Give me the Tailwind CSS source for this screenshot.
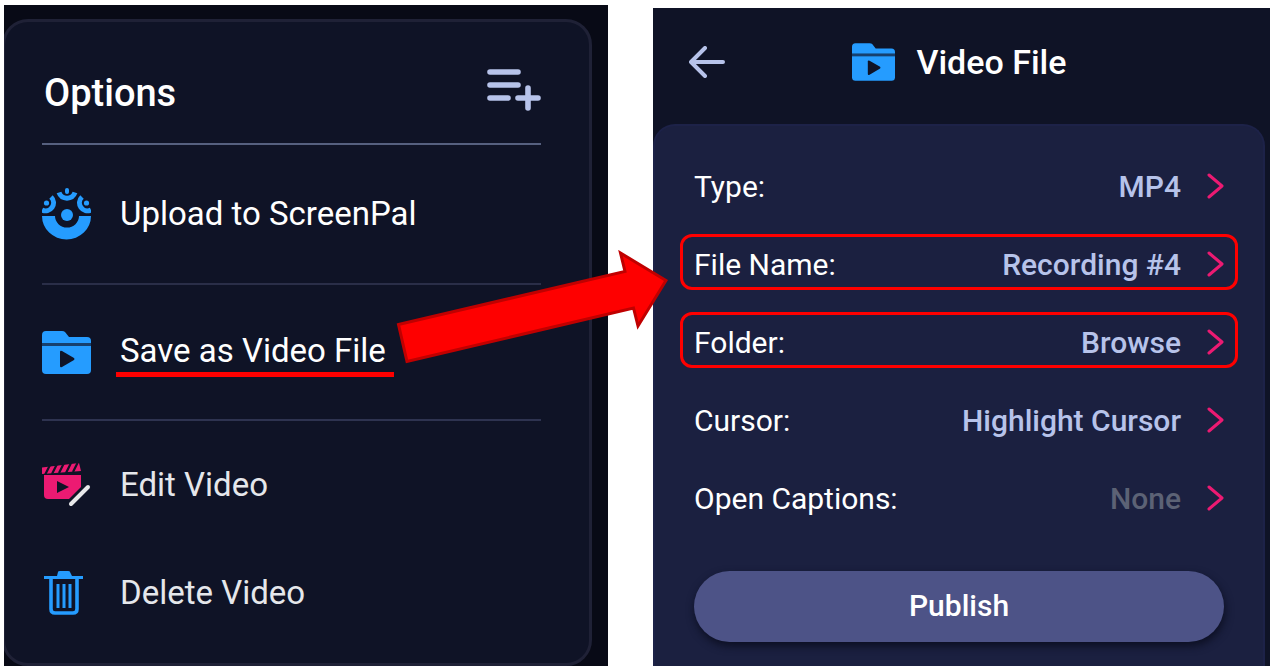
<!DOCTYPE html>
<html lang="en">
<head>
<meta charset="utf-8">
<meta name="viewport" content="width=device-width, initial-scale=1">
<title>Save as Video File</title>
<script src="https://cdn.jsdelivr.net/npm/@tailwindcss/browser@4"></script>
</head>
<body class="bg-white font-['Roboto',sans-serif] text-white">
<svg class="hidden" aria-hidden="true">
  <symbol id="folder" viewBox="0 0 49 43">
    <path fill="#259cff" d="M0 12V4q0-4 4-4h16q2 0 3 1l4 5h18q4 0 4 4v2z"/>
    <path fill="#17406e" d="M0 12h49v3H0z"/>
    <path fill="#259cff" d="M0 15h49v24q0 4-4 4H4q-4 0-4-4z"/>
    <path fill="#0f1326" d="M18 21q0-2 2-1l12 7q1 1 0 2l-12 7q-2 1-2-1z"/>
  </symbol>
  <symbol id="chevron" viewBox="0 0 18 28">
    <path fill="none" stroke="#ec1a72" stroke-width="3" stroke-linecap="round" stroke-linejoin="round" d="M2 3 15 14 2 25"/>
  </symbol>
</svg>
<main class="flex items-start pl-1 pr-0.5 gap-[45px] pb-[3px]">
  <section class="relative mt-[5px] flex-[604] bg-[#080a16]">
    <div class="pt-[14px] pr-4 overflow-hidden">
      <div class="-ml-0.5 rounded-[26px] border-[3px] border-[#1f2136] bg-[#0f1326] pl-[37px] pr-12 pb-[26px]">
        <header class="flex h-[121px] items-center justify-between pt-5">
          <h1 class="pl-0.5 text-[38px] leading-10 font-medium">Options</h1>
          <button type="button" aria-label="Add option" class="mb-1.5">
            <svg class="h-[43px] w-[54px]" viewBox="0 0 54 43" fill="none" stroke="#b7c3ea" stroke-width="5.6" stroke-linecap="round"><path d="M3 4h28M3 17h28M3 30h18M31 30h20M41 20v20"/></svg>
          </button>
        </header>
        <hr class="border-t-2 border-[#56607f]">
        <button type="button" class="flex h-[138px] w-full items-center gap-[29px] text-[33px]">
          <svg class="h-[52px] w-[49px] shrink-0" viewBox="0 0 49 52" fill="none" stroke="#259cff">
            <path fill="#259cff" stroke="none" d="M0 28H13a12 11.500 0 0 0 24 0H49A24.500 23.500 0 0 1 0 28z"/>
            <circle cx="25" cy="27" r="6" fill="#259cff" stroke="none"/>
            <path stroke-width="5" d="M17 4.500a8.500 8.500 0 0 0 16 0"/>
            <path stroke-width="5" d="M9 9a8 8 0 0 1-9 13M40 9a8 8 0 0 0 9 13"/>
            <path stroke-width="4" stroke-linecap="round" d="M25 2v2"/>
            <circle cx="4.500" cy="15" r="2.600" fill="#259cff" stroke="none"/>
            <circle cx="44.500" cy="15" r="2.600" fill="#259cff" stroke="none"/>
          </svg>
          <span>Upload to ScreenPal</span>
        </button>
        <hr class="border-t-2 border-[#2a2e48]">
        <button type="button" class="flex h-[134px] w-full items-center gap-[25px] text-[33px]">
          <svg class="h-[43px] w-[49px] shrink-0"><use href="#folder"/></svg>
          <span class="border-b-5 border-[#fe0000] pt-[3px] pr-2 pl-1 leading-[42px]">Save as Video File</span>
        </button>
        <hr class="border-t-2 border-[#2e3350]">
        <button type="button" class="flex h-32 w-full items-center gap-[29px] text-[33px] text-gray-200">
          <svg class="h-11 w-[49px] shrink-0" viewBox="0 0 49 44">
            <path fill="#ec1a72" d="M0 4.500 37 0 39 8 0 11z"/>
            <path stroke="#0f1326" stroke-width="2.200" d="M8 2 3 12M15 1 10 11M22 0 17 10M29 0 24 10M36-1 31 9"/>
            <path fill="#ec1a72" d="M2 12h37v12L27 36H6q-4 0-4-4z"/>
            <path fill="#0f1326" d="m15 18 12 6-12 6z"/>
            <path d="M29 41 46 24" stroke="#e8e8ea" stroke-width="4" stroke-linecap="round"/>
          </svg>
          <span>Edit Video</span>
        </button>
        <button type="button" class="flex h-22 w-full items-center gap-[29px] text-[33px] text-gray-200">
          <svg class="h-11 w-[49px] shrink-0" viewBox="0 0 49 44" fill="none" stroke="#259cff">
            <path fill="#259cff" stroke="none" d="M2 5H15l1-4q0-1 2-1H26q2 0 2 1l2 4H41V8H2z"/>
            <path stroke-width="3.600" d="M9 7V38q0 4 4 4H31q4 0 4-4V7"/>
            <path stroke-width="3" d="M16 13V37M22 13V37M28 13V37"/>
          </svg>
          <span>Delete Video</span>
        </button>
      </div>
    </div>
    <svg class="absolute top-[245px] -right-[60px] h-[120px] w-[272px]" viewBox="396 250 272 120" aria-hidden="true">
      <path fill="#fe0000" stroke="#c00000" stroke-width="3" d="M398.500 324.500 625 271.500 620.500 253 666 280.500 638 326 633.500 308 407 361.500z"/>
    </svg>
  </section>

  <section class="mt-2 flex-[612] bg-[#0f1326] pr-[5px]">
    <header class="grid h-[116px] grid-cols-[1fr_auto_1fr] items-center px-9 pb-2">
      <button type="button" aria-label="Back" class="justify-self-start">
        <svg class="h-8 w-9" viewBox="0 0 36 32" fill="none" stroke="#b7c3ea" stroke-width="4" stroke-linecap="round" stroke-linejoin="round"><path d="M16 2 2 16 16 30M3 16H34"/></svg>
      </button>
      <h2 class="flex items-center gap-[22px] text-[34px] font-medium"><svg class="h-[38px] w-[43px]"><use href="#folder"/></svg>Video File</h2>
    </header>
    <div class="rounded-t-[22px] border-2 border-b-0 border-[#1d2248] bg-[#1b2040] px-[25px] pt-[30px] pb-6">
      <ul class="flex flex-col gap-[22px] text-[30px]">
        <li><button type="button" class="flex h-14 w-full items-center rounded-xl border-3 border-transparent pt-1 pr-2.5 pl-[11px]"><span>Type:</span><span class="ml-auto font-medium text-[#b7c3ea]">MP4</span><svg class="ml-[26px] h-7 w-[18px]"><use href="#chevron"/></svg></button></li>
        <li><button type="button" class="flex h-14 w-full items-center rounded-xl border-3 border-[#fe0000] pt-1 pr-2.5 pl-[11px]"><span>File Name:</span><span class="ml-auto font-medium text-[#b7c3ea]">Recording #4</span><svg class="ml-[26px] h-7 w-[18px]"><use href="#chevron"/></svg></button></li>
        <li><button type="button" class="flex h-14 w-full items-center rounded-xl border-3 border-[#fe0000] pt-1 pr-2.5 pl-[11px]"><span>Folder:</span><span class="ml-auto font-medium text-[#b7c3ea]">Browse</span><svg class="ml-[26px] h-7 w-[18px]"><use href="#chevron"/></svg></button></li>
        <li><button type="button" class="flex h-14 w-full items-center rounded-xl border-3 border-transparent pt-1 pr-2.5 pl-[11px]"><span>Cursor:</span><span class="ml-auto font-medium text-[#b7c3ea]">Highlight Cursor</span><svg class="ml-[26px] h-7 w-[18px]"><use href="#chevron"/></svg></button></li>
        <li><button type="button" class="flex h-14 w-full items-center rounded-xl border-3 border-transparent pt-1 pr-2.5 pl-[11px]"><span>Open Captions:</span><span class="ml-auto font-medium text-[#5c6275]">None</span><svg class="ml-[26px] h-7 w-[18px]"><use href="#chevron"/></svg></button></li>
      </ul>
      <div class="px-3.5 pt-[47px]">
        <button type="button" class="h-[71px] w-full rounded-full bg-[#4d5387] pb-0.5 text-[30px] font-medium shadow-[1px_4px_8px_#0c0f22]">Publish</button>
      </div>
    </div>
  </section>
</main>
</body>
</html>
